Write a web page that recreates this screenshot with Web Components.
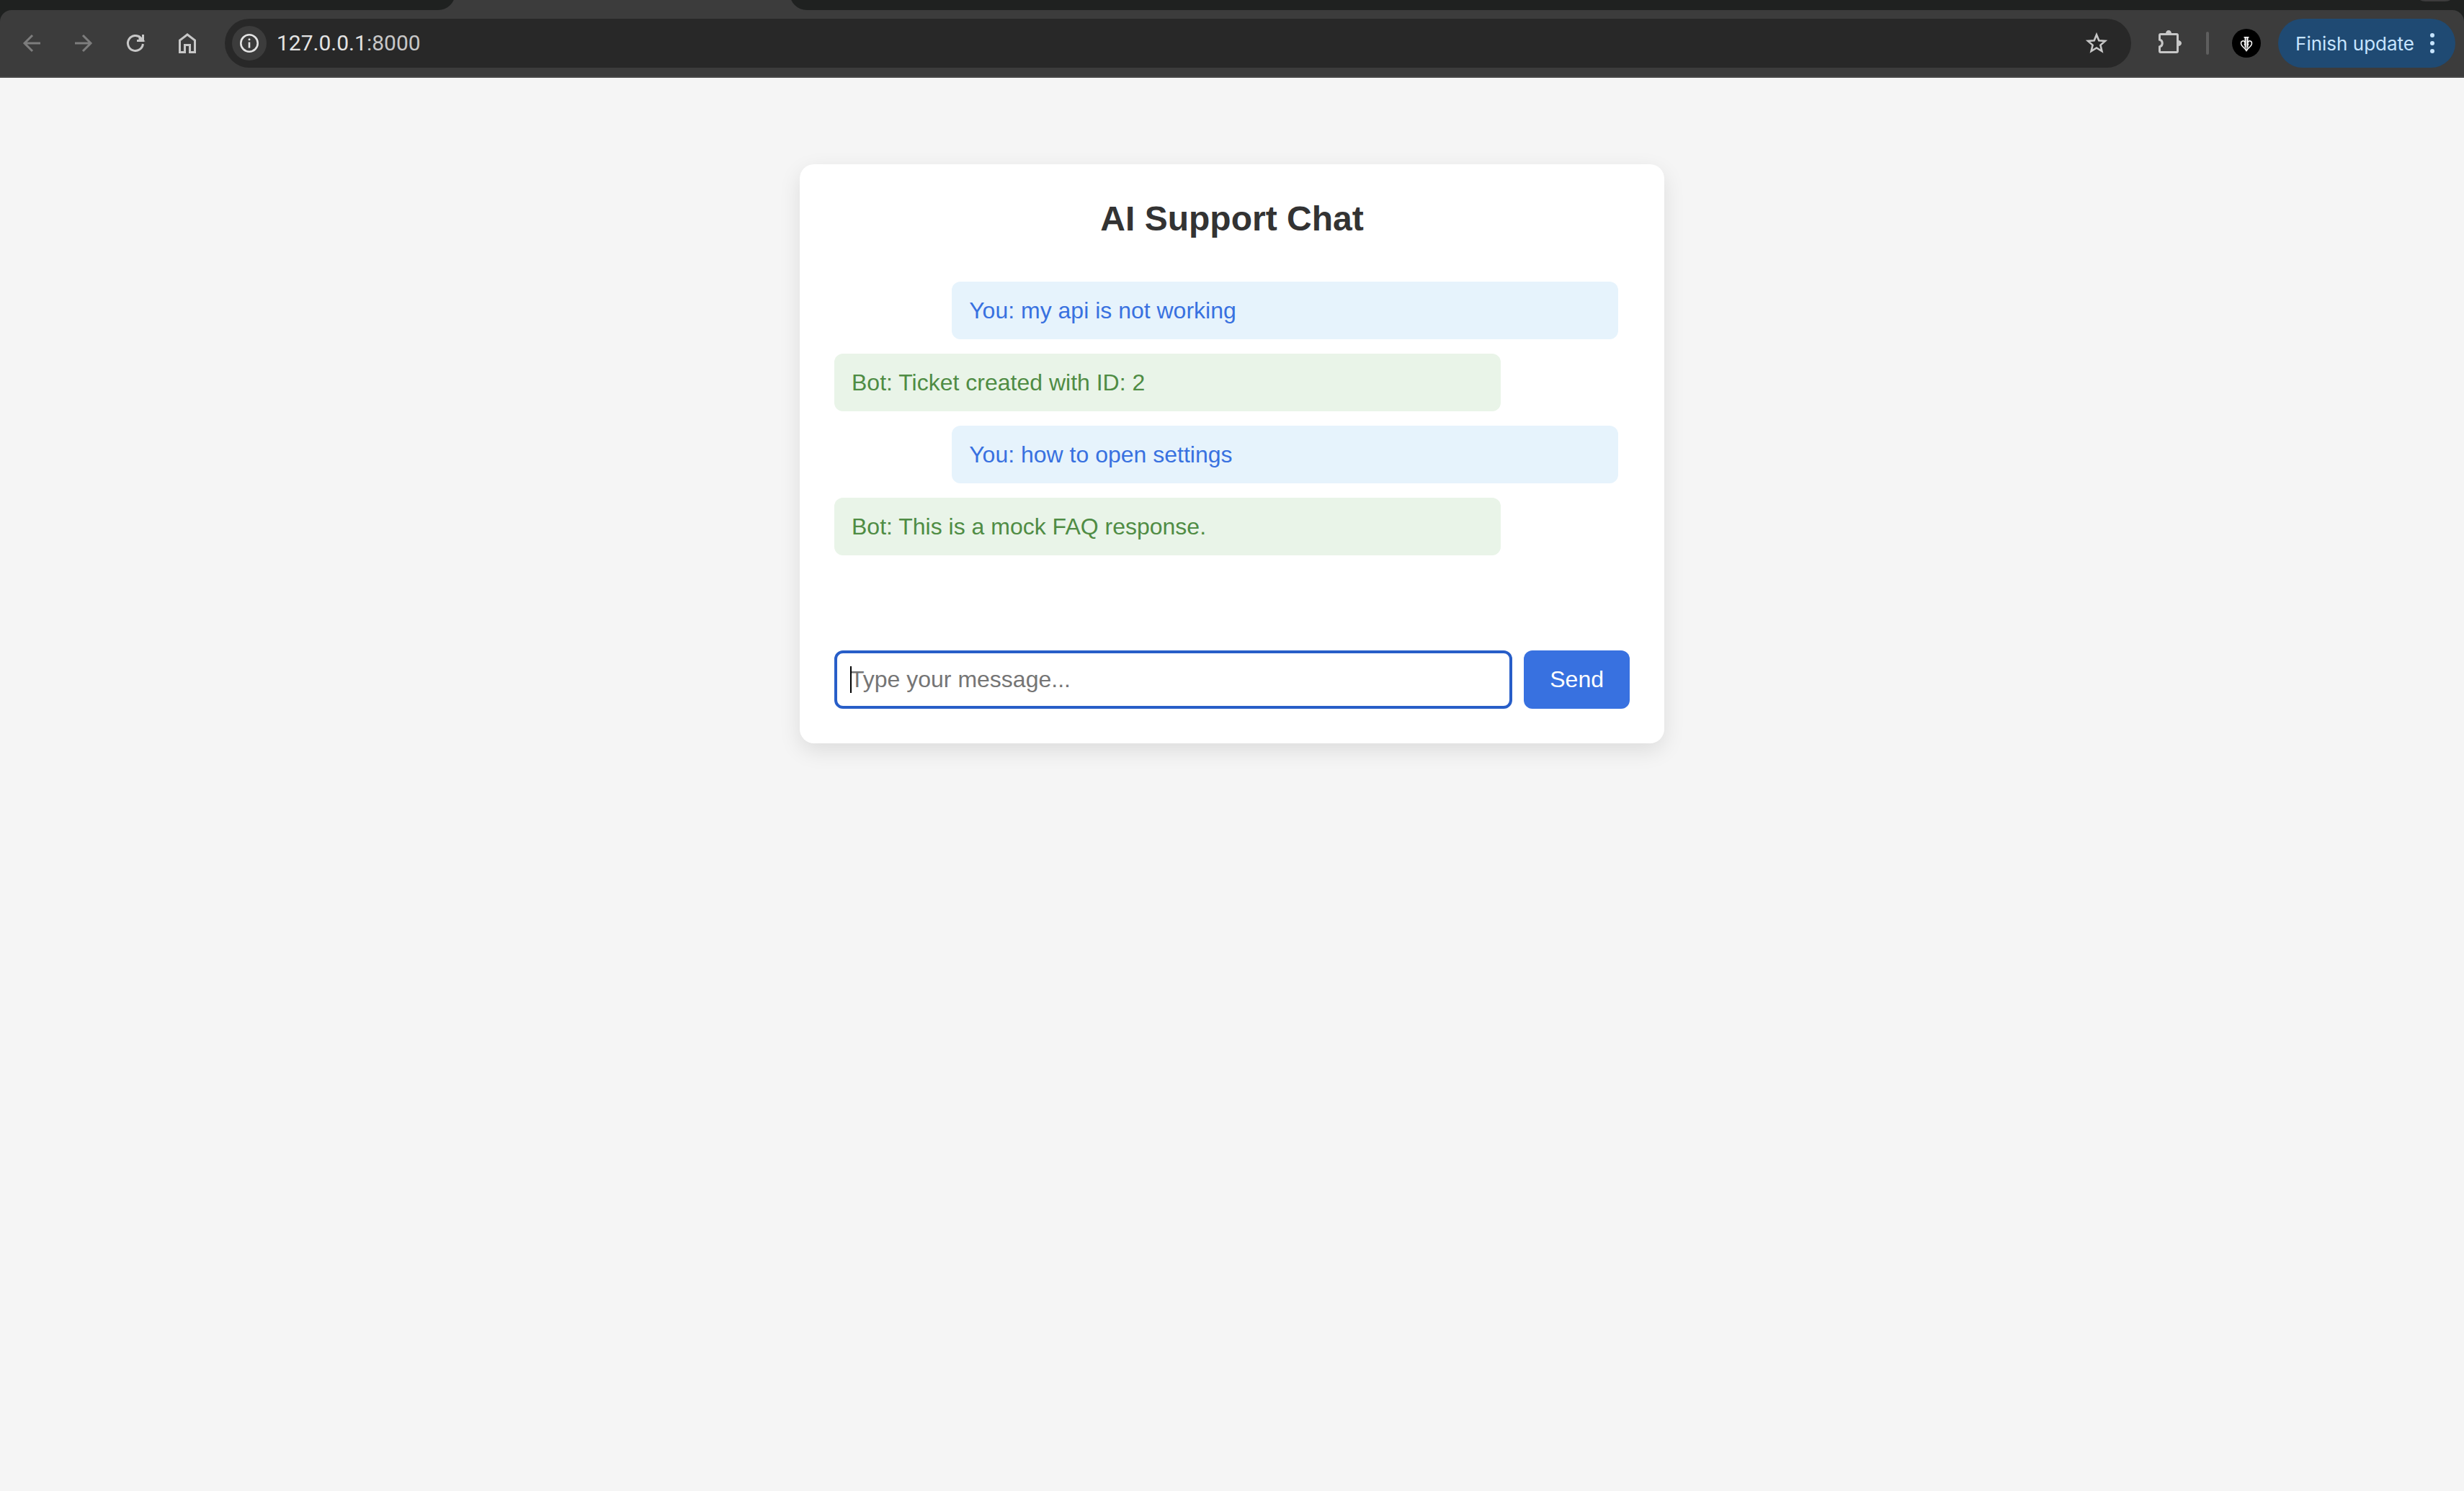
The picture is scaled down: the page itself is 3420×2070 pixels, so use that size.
<!DOCTYPE html>
<html lang="en">
<head>
<meta charset="utf-8">
<title>AI Support Chat</title>
<style>
  body { margin: 0; min-height: 100vh; background: #f5f5f5; font-family: "Liberation Sans", Arial, sans-serif; font-size: 32px; color: #333; }
</style>
</head>
<body>
<browser-bar></browser-bar>
<main>
  <chat-card heading="AI Support Chat">
    <chat-message from="user">You: my api is not working</chat-message>
    <chat-message from="bot">Bot: Ticket created with ID: 2</chat-message>
    <chat-message from="user">You: how to open settings</chat-message>
    <chat-message from="bot">Bot: This is a mock FAQ response.</chat-message>
    <chat-composer slot="composer"></chat-composer>
  </chat-card>
</main>

<template id="browser-bar">
  <style>
    :host { display: block; background: #1f2120; font-family: Inter, Roboto, sans-serif; }
    .tabs { display: flex; align-items: flex-end; height: 14px; overflow: hidden; background: #3c3c3c; }
    .tab { height: 40px; background: #1f2120; flex: none; }
    .before { width: 632px; border-bottom-right-radius: 24px; }
    .active { width: 464px; }
    .after { flex: 1; display: flex; justify-content: flex-end; border-bottom-left-radius: 24px; padding-right: 12px; }
    .search { width: 56px; height: 28px; border-radius: 20px; background: #3c3c3c; }
    nav { display: flex; align-items: center; height: 92px; background: #3c3c3c; border-bottom: 2px solid #474747; border-radius: 16px 16px 0 0; padding: 0 12px 0 8px; color: #c7c7c7; }
    button { font: inherit; color: inherit; background: none; border: 0; padding: 0; display: flex; align-items: center; justify-content: center; flex: none; }
    svg { display: block; }
    .tool { width: 72px; height: 68px; }
    .tool:disabled { color: #7d7d7d; }
    .address { flex: 1; display: flex; align-items: center; height: 68px; margin-left: 16px; border-radius: 34px; background: #282828; padding: 0 12px 0 10px; }
    .info { width: 48px; height: 48px; border-radius: 24px; background: #3c3c3c; color: #e3e3e3; }
    .url { flex: 1; padding-left: 14px; font-family: Roboto, sans-serif; font-size: 30px; line-height: 40px; color: #c7c7c7; }
    .url b { font-weight: 400; color: #e3e3e3; }
    .star { width: 72px; height: 48px; }
    .puzzle { width: 72px; height: 68px; margin-left: 18px; }
    .rule { width: 4px; height: 32px; border-radius: 2px; background: #5e5e5e; margin-left: 14px; }
    .avatar { width: 40px; height: 40px; border-radius: 20px; background: #000; margin-left: 32px; color: #fff; }
    .update { height: 68px; border-radius: 34px; background: #1f4a73; color: #c6e4ff; margin-left: 24px; padding: 0 28px 0 24px; gap: 21px; font-size: 26px; }
  </style>
  <div class="tabs"><div class="tab before"></div><div class="active"></div><div class="tab after"><div class="search"></div></div></div>
  <nav>
    <button class="tool" disabled aria-label="Back"><svg width="32" height="32" viewBox="0 0 32 32" fill="none" stroke="currentColor" stroke-width="3"><path d="M28 16H6M17 5L6 16l11 11"/></svg></button>
    <button class="tool" disabled aria-label="Forward"><svg width="32" height="32" viewBox="0 0 32 32" fill="none" stroke="currentColor" stroke-width="3"><path d="M4 16h22M15 5l11 11-11 11"/></svg></button>
    <button class="tool" aria-label="Reload"><svg width="32" height="32" viewBox="0 0 32 32" fill="none" stroke="currentColor" stroke-width="3"><path d="M26.4 17A10.500 10.500 0 1 1 23.500 8.700L26 11.500"/><path d="M18 12.500h8.500V4"/><path d="M22 8l4 4h-4z"/></svg></button>
    <button class="tool" aria-label="Home"><svg width="32" height="32" viewBox="0 0 32 32" fill="none" stroke="currentColor" stroke-width="3"><path d="M5.500 28.500V12L16 4l10.500 8v16.500h-7v-10h-7v10z"/></svg></button>
    <div class="address">
      <button class="info" aria-label="Site information"><svg width="28" height="28" viewBox="0 0 28 28" fill="none" stroke="currentColor"><circle cx="14" cy="14" r="11.700" stroke-width="2.600"/><path d="M14 12.500V20.500" stroke-width="2.600"/><circle cx="14" cy="8.700" r="1.500" fill="currentColor" stroke="none"/></svg></button>
      <span class="url"><b>127.0.0.1</b>:8000</span>
      <button class="star" aria-label="Bookmark"><svg width="32" height="32" viewBox="0 0 32 32" fill="none" stroke="currentColor" stroke-width="2.600"><path d="M16 4.200L19.300 12.200 28 12.900 21.400 18.600 23.400 27 16 22.500 8.600 27 10.600 18.600 4 12.900 12.700 12.200z"/></svg></button>
    </div>
    <button class="puzzle" aria-label="Extensions"><svg width="36" height="36" viewBox="0 0 36 36"><path d="M5 5.500H27a1.500 1.500 0 0 1 1.500 1.500V29a1.500 1.500 0 0 1-1.500 1.500H5A1.500 1.500 0 0 1 3.500 29V23a5.200 5.200 0 0 0 0-10V7A1.500 1.500 0 0 1 5 5.500z" fill="none" stroke="currentColor" stroke-width="3"/><path d="M12 4.500a4 4.500 0 0 1 8 0zM29.500 14a4.500 4 0 0 1 0 8z" fill="currentColor"/></svg></button>
    <span class="rule"></span>
    <button class="avatar" aria-label="Profile"><svg width="20" height="24" viewBox="0 0 20 24" fill="none" stroke="currentColor" stroke-width="1.500"><path d="M8 3.500h4V22h-4z" fill="#8a8a8a" stroke="none"/><path d="M6.500 3.700h7M8.300 3.500V18M11.700 3.500V18M7 14.500c1-1 1.300-3 .500-4.500-1-2-5-1.500-5 2 0 4.500 5 6 7.500 10.500 2.500-4.500 7.500-6 7.500-10.500 0-3.500-4-4-5-2-.8 1.500-.5 3.500.5 4.500"/></svg></button>
    <button class="update">Finish update<svg width="8" height="28" viewBox="0 0 8 28" fill="currentColor"><circle cx="4" cy="3" r="3"/><circle cx="4" cy="14" r="3"/><circle cx="4" cy="25" r="3"/></svg></button>
  </nav>
</template>

<template id="chat-card">
  <style>
    :host { display: block; box-sizing: border-box; width: 1200px; max-width: 100%; margin: 120px auto; padding: 48px; background: #fff; border-radius: 20px; box-shadow: 0 10px 30px rgba(0, 0, 0, .1); }
    h2 { margin: 0 0 60px; font-size: 48px; line-height: 55px; text-align: center; color: #333; }
    .messages { display: flex; flex-direction: column; gap: 20px; min-height: 480px; padding-right: 16px; margin-bottom: 32px; }
  </style>
  <h2></h2>
  <div class="messages"><slot></slot></div>
  <slot name="composer"></slot>
</template>

<template id="chat-message">
  <style>
    :host { display: block; box-sizing: border-box; width: 85%; padding: 20px 24px; line-height: 40px; border-radius: 12px; }
    :host([from="user"]) { align-self: flex-end; background: #e6f3fc; color: #3871e0; }
    :host([from="bot"]) { align-self: flex-start; background: #e9f4e8; color: #4f8c44; }
  </style>
  <slot></slot>
</template>

<template id="chat-composer">
  <style>
    :host { display: block; }
    form { display: flex; gap: 16px; }
    .field { position: relative; flex: 1; display: flex; }
    input { flex: 1; min-width: 0; font: inherit; padding: 18px; border: 4px solid #285ec8; border-radius: 12px; outline: 0; background: #fff; color: #333; }
    input::placeholder { color: #757575; }
    .caret { position: absolute; left: 22px; top: 22px; bottom: 22px; width: 2px; background: #000; }
    button { font: inherit; color: #fff; background: #3871e0; border: 0; border-radius: 12px; padding: 0 36px; }
  </style>
  <form>
    <div class="field"><input type="text" placeholder="Type your message..." aria-label="Type your message"><span class="caret"></span></div>
    <button type="button">Send</button>
  </form>
</template>

<script>
  class TemplateElement extends HTMLElement {
    constructor() {
      super();
      const template = document.getElementById(this.localName);
      this.attachShadow({ mode: "open" }).append(template.content.cloneNode(true));
    }
  }
  class ChatCard extends TemplateElement {
    connectedCallback() {
      this.shadowRoot.querySelector("h2").textContent = this.getAttribute("heading");
    }
  }
  customElements.define("browser-bar", class extends TemplateElement {});
  customElements.define("chat-card", ChatCard);
  customElements.define("chat-message", class extends TemplateElement {});
  customElements.define("chat-composer", class extends TemplateElement {});
</script>
</body>
</html>
